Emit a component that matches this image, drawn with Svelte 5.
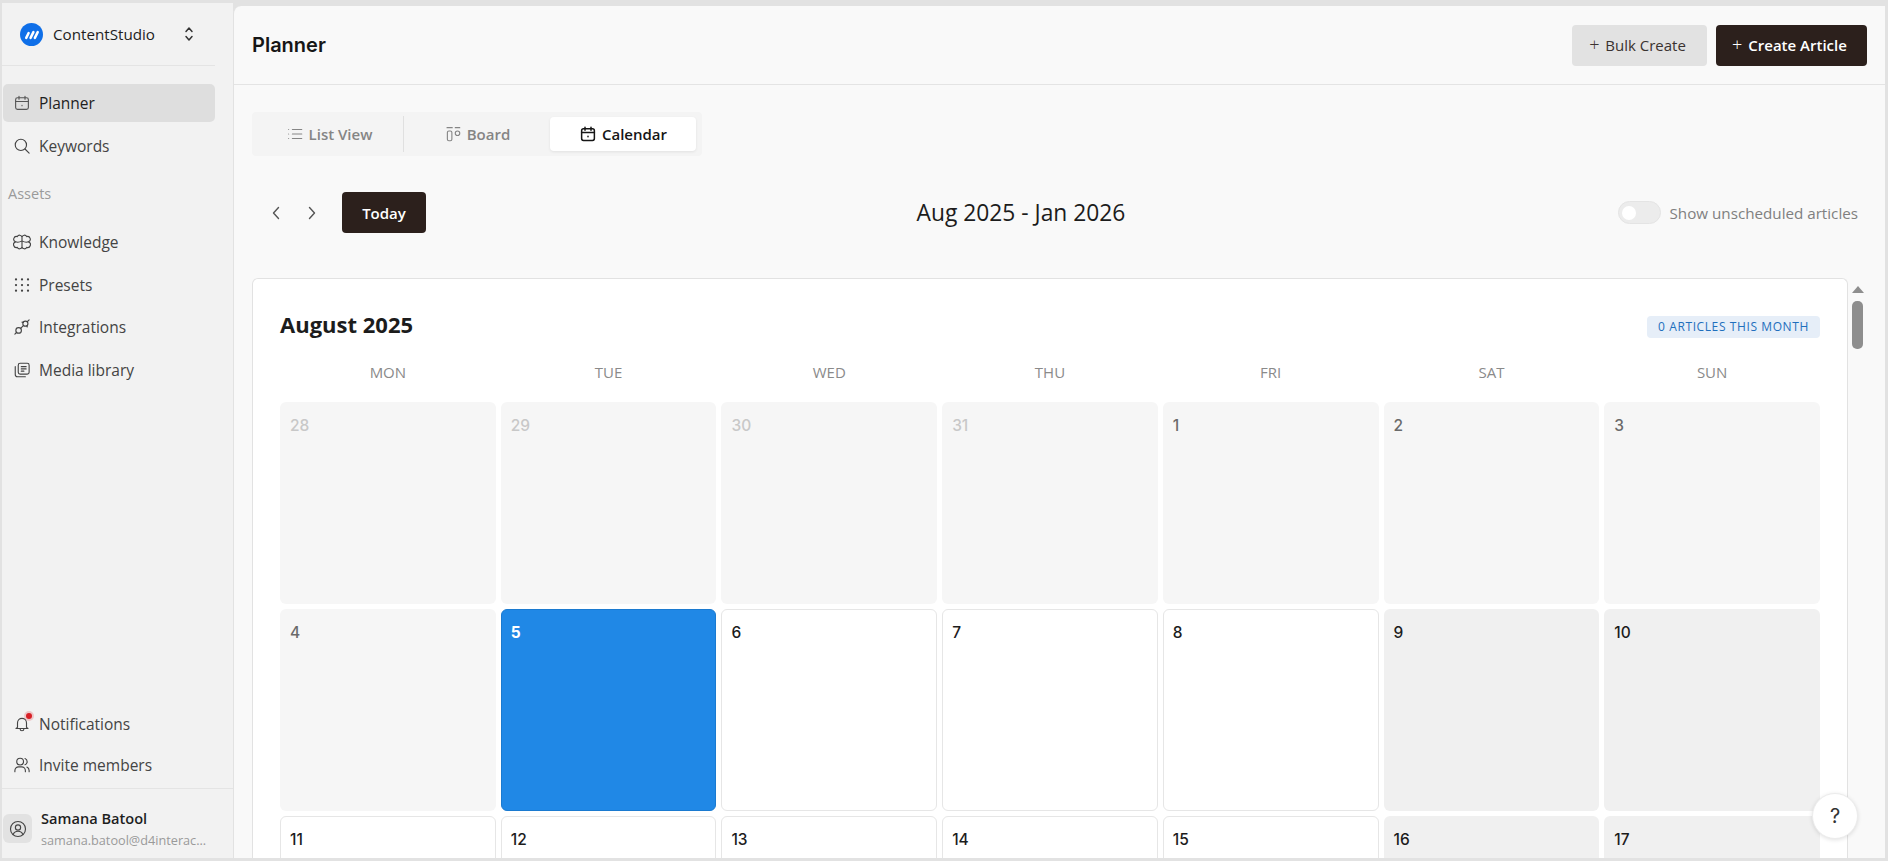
<script lang="ts">
    interface Day {
        n: number;
        kind: 'muted' | 'past' | 'today' | 'open' | 'weekend';
    }

    const navTop = ['Planner', 'Keywords'];
    const navAssets = ['Knowledge', 'Presets', 'Integrations', 'Media library'];
    const weekdays = ['MON', 'TUE', 'WED', 'THU', 'FRI', 'SAT', 'SUN'];

    const days: Day[] = [
        { n: 28, kind: 'muted' }, { n: 29, kind: 'muted' }, { n: 30, kind: 'muted' }, { n: 31, kind: 'muted' },
        { n: 1, kind: 'past' }, { n: 2, kind: 'past' }, { n: 3, kind: 'past' },
        { n: 4, kind: 'past' }, { n: 5, kind: 'today' }, { n: 6, kind: 'open' }, { n: 7, kind: 'open' },
        { n: 8, kind: 'open' }, { n: 9, kind: 'weekend' }, { n: 10, kind: 'weekend' },
        { n: 11, kind: 'open' }, { n: 12, kind: 'open' }, { n: 13, kind: 'open' }, { n: 14, kind: 'open' },
        { n: 15, kind: 'open' }, { n: 16, kind: 'weekend' }, { n: 17, kind: 'weekend' }
    ];
</script>

{#snippet icon(name: string)}
    <svg class="icon" viewBox="0 0 24 24" fill="none" stroke="currentColor" stroke-width="1.5" stroke-linecap="round" stroke-linejoin="round">
        {#if name === 'Planner' || name === 'Calendar'}
            <rect x="3.5" y="5" width="17" height="15.5" rx="2.5" />
            <path d="M8 3v4M16 3v4M3.5 10h17M12 15v.5" />
        {:else if name === 'Keywords'}
            <circle cx="10.5" cy="10.5" r="7.5" />
            <path d="M16 16l5.5 5.5" />
        {:else if name === 'Knowledge'}
            <path d="M12 5.5A3.3 3.3 0 0 0 5.8 4.8 3.3 3.3 0 0 0 3.5 11.8 3.3 3.3 0 0 0 5.8 19.2 3.3 3.3 0 0 0 12 18.5 3.3 3.3 0 0 0 18.2 19.2 3.3 3.3 0 0 0 20.5 11.8 3.3 3.3 0 0 0 18.2 4.8 3.3 3.3 0 0 0 12 5.5V18.5M3.5 11.8c2.5 1 5.5.5 8.5-1.3 3 1.8 6 2.3 8.5 1.3" />
        {:else if name === 'Presets'}
            <path stroke-width="3" d="M4 4.5h.01M12 4.5h.01M20 4.5h.01M4 12h.01M12 12h.01M20 12h.01M4 19.5h.01M12 19.5h.01M20 19.5h.01" />
        {:else if name === 'Integrations'}
            <circle cx="7.5" cy="16.5" r="3.7" />
            <circle cx="16.5" cy="7.5" r="3.4" />
            <path d="M2.5 21.5 5 19M21.5 2.500 19 5M10.3 13.7l3.8-3.8M12 5.500l2 .5M18.500 10l.5 2" />
        {:else if name === 'Media library'}
            <rect x="7" y="3" width="14.5" height="14.5" rx="2.5" />
            <path d="M3 7.500V18a3 3 0 0 0 3 3h10.500M11 7.500h6.500M11 10.500h6.500M11 13.500h3.500" />
        {:else if name === 'Notifications'}
            <path d="M6 16.500V10.500a6 6 0 0 1 12 0v6l2 1.500H4zM9.500 18.500a2.500 2.500 0 0 0 5 0" />
        {:else if name === 'Invite members'}
            <circle cx="9.5" cy="7.5" r="4.5" />
            <path d="M2.500 21v-1.500a5 5 0 0 1 5-5h4a5 5 0 0 1 5 5V21M16 3.300a4.500 4.500 0 0 1 0 8.400M18.500 14.800a5 5 0 0 1 3 4.700V21" />
        {:else if name === 'List View'}
            <path d="M8.500 6H21M8.500 12H21M8.500 18H21M3.500 6h.01M3.500 12h.01M3.500 18h.01" />
        {:else if name === 'Board'}
            <path d="M4 3.500h7M15 3.500h6" />
            <rect x="4.5" y="8" width="6" height="13" rx="2" />
            <circle cx="18" cy="11" r="3" />
        {:else if name === 'User'}
            <circle cx="12" cy="12" r="10" />
            <circle cx="12" cy="10" r="3.5" />
            <path d="M5.500 19.500c1-3 3.500-4.500 6.500-4.500s5.500 1.500 6.500 4.500" />
        {/if}
    </svg>
{/snippet}

<div class="shell">
    <aside class="sidebar">
        <div class="brand">
            <span class="logo">
                <svg viewBox="0 0 24 24" fill="none" stroke="#fff" stroke-width="2.6" stroke-linecap="round">
                    <path d="M6.500 15.500 9 10.500M11 15.500l3-6M15.500 15.500l3-6" />
                </svg>
            </span>
            <span class="brand-name">ContentStudio</span>
            <svg class="updown" viewBox="0 0 12 16" fill="none" stroke="currentColor" stroke-width="1.5" stroke-linecap="round" stroke-linejoin="round">
                <path d="M3 5.500 6 2l3 3.500M3 10.500 6 14l3-3.500" />
            </svg>
        </div>

        <nav class="nav-top">
            {#each navTop as item, i}
                <div class="nav-item" class:active={i === 0}>
                    {@render icon(item)}
                    <span>{item}</span>
                </div>
            {/each}
        </nav>

        <div class="section-label">Assets</div>

        <nav class="nav-assets">
            {#each navAssets as item}
                <div class="nav-item">
                    {@render icon(item)}
                    <span>{item}</span>
                </div>
            {/each}
        </nav>

        <div class="nav-bottom">
            <div class="nav-item">
                <span class="bell">
                    {@render icon('Notifications')}
                    <i class="dot"></i>
                </span>
                <span>Notifications</span>
            </div>
            <div class="nav-item">
                {@render icon('Invite members')}
                <span>Invite members</span>
            </div>
        </div>

        <div class="account">
            <span class="avatar">{@render icon('User')}</span>
            <div class="who">
                <div class="who-name">Samana Batool</div>
                <div class="who-mail">samana.batool@d4interac...</div>
            </div>
        </div>
    </aside>

    <main class="main">
        <header class="topbar">
            <h1>Planner</h1>
            <div class="actions">
                <button class="btn light"><span class="plus">+</span> Bulk Create</button>
                <button class="btn dark"><span class="plus">+</span> Create Article</button>
            </div>
        </header>

        <div class="content">
            <div class="tabs">
                <div class="tab list">{@render icon('List View')}<span>List View</span></div>
                <div class="tab board">{@render icon('Board')}<span>Board</span></div>
                <div class="tab selected">{@render icon('Calendar')}<span>Calendar</span></div>
            </div>

            <div class="toolbar">
                <div class="pager">
                    <svg class="chev" viewBox="0 0 12 16" fill="none" stroke="currentColor" stroke-width="1.4" stroke-linecap="round" stroke-linejoin="round"><path d="M8.500 2.500 3.500 8l5 5.500" /></svg>
                    <svg class="chev" viewBox="0 0 12 16" fill="none" stroke="currentColor" stroke-width="1.4" stroke-linecap="round" stroke-linejoin="round"><path d="M3.500 2.500 8.500 8l-5 5.500" /></svg>
                    <button class="btn dark today">Today</button>
                </div>
                <div class="range">Aug 2025 - Jan 2026</div>
                <div class="unscheduled">
                    <span class="toggle"><i></i></span>
                    <span>Show unscheduled articles</span>
                </div>
            </div>

            <div class="scroller">
                <section class="month">
                    <div class="month-head">
                        <h2>August 2025</h2>
                        <span class="badge">0 ARTICLES THIS MONTH</span>
                    </div>
                    <div class="grid weekdays">
                        {#each weekdays as d}
                            <div>{d}</div>
                        {/each}
                    </div>
                    <div class="grid cells">
                        {#each days as day}
                            <div class="cell {day.kind}">{day.n}</div>
                        {/each}
                    </div>
                </section>
                <div class="scrollbar">
                    <i class="arrow"></i>
                    <i class="thumb"></i>
                </div>
            </div>
        </div>

        <button class="help">?</button>
    </main>
</div>

<style>
    :global(body) {
        margin: 0;
        background: #e2e2e2;
    }

    .shell {
        height: 861px;
        box-sizing: border-box;
        padding: 3px 3px 3px 2px;
        display: grid;
        grid-template-columns: 231px 1fr;
        overflow: hidden;
        font-family: "Open Sans", "Noto Sans", sans-serif;
        color: #1c1c1c;
    }

    .icon {
        width: 18px;
        height: 18px;
        flex: none;
    }

    /* sidebar */
    .sidebar {
        background: #f2f2f2;
        display: flex;
        flex-direction: column;
        min-height: 0;
    }

    .brand {
        height: 62px;
        margin-right: 18px;
        padding-left: 18px;
        display: flex;
        align-items: center;
        border-bottom: 1px solid #e4e4e4;
    }

    .logo {
        width: 23px;
        height: 23px;
        border-radius: 50%;
        background: #0f6fe8;
        display: block;
        flex: none;
    }

    .logo svg {
        display: block;
        width: 23px;
        height: 23px;
    }

    .brand-name {
        margin-left: 10px;
        font-size: 15.2px;
        font-weight: 500;
        color: #1e1e1e;
    }

    .updown {
        margin-left: 28px;
        width: 12px;
        height: 16px;
        color: #333;
    }

    .nav-top {
        margin: 18px 18px 0 1px;
        display: flex;
        flex-direction: column;
        gap: 5px;
    }

    .nav-item {
        height: 38px;
        padding-left: 10px;
        display: flex;
        align-items: center;
        gap: 8px;
        font-size: 15.5px;
        font-weight: 500;
        color: #444;
        border-radius: 5px;
    }

    .nav-item.active {
        background: #dedede;
        color: #1e1e1e;
    }

    .nav-item.active .icon {
        color: #555;
    }

    .section-label {
        margin: 19px 0 0 6px;
        height: 24px;
        font-size: 14.5px;
        color: #9a9a9a;
    }

    .nav-assets {
        margin: 15px 18px 0 1px;
        display: flex;
        flex-direction: column;
        gap: 4.6px;
    }

    .nav-bottom {
        margin: auto 18px 0 1px;
        display: flex;
        flex-direction: column;
        gap: 3px;
    }

    .bell {
        position: relative;
        display: flex;
    }

    .dot {
        position: absolute;
        top: -2px;
        right: -1px;
        width: 6px;
        height: 6px;
        border-radius: 50%;
        background: #d81f26;
        box-shadow: 0 0 0 2px rgba(216, 31, 38, 0.2);
    }

    .account {
        margin-top: 4px;
        height: 70px;
        box-sizing: border-box;
        padding: 10px 0 0 1px;
        border-top: 1px solid #e4e4e4;
        display: flex;
        align-items: center;
        gap: 9px;
    }

    .avatar {
        width: 29px;
        height: 29px;
        border-radius: 6px;
        background: #e2e2e2;
        display: flex;
        align-items: center;
        justify-content: center;
        color: #444;
    }

    .who-name {
        font-size: 14.6px;
        font-weight: 600;
        color: #1e1e1e;
    }

    .who-mail {
        margin-top: 3px;
        font-size: 12.7px;
        color: #9a9a9a;
    }

    /* main panel */
    .main {
        position: relative;
        margin-top: 3px;
        background: #f9f9f9;
        border-radius: 8px 0 0 0;
        border-left: 1px solid #e2e2e2;
        display: flex;
        flex-direction: column;
        min-height: 0;
        overflow: hidden;
    }

    .topbar {
        height: 79px;
        flex: none;
        box-sizing: border-box;
        padding: 0 18px;
        display: flex;
        align-items: center;
        justify-content: space-between;
        border-bottom: 1px solid #e4e4e4;
    }

    h1 {
        margin: 0;
        font-family: Inter, sans-serif;
        font-size: 20px;
        font-weight: 600;
        color: #161616;
    }

    .actions {
        display: flex;
        gap: 9px;
    }

    .btn {
        height: 41px;
        border: none;
        border-radius: 4px;
        font-family: inherit;
        font-size: 15px;
        font-weight: 600;
        padding: 0;
    }

    .btn.light {
        width: 135px;
        padding-right: 4px;
        background: #e2e2e2;
        color: #3a3230;
        font-weight: 500;
    }

    .btn.dark {
        width: 151px;
        padding-right: 4px;
        background: #2c201c;
        color: #fff;
    }

    .plus {
        font-size: 18px;
        font-weight: 300;
        line-height: 1;
        margin-right: 2px;
    }

    .content {
        flex: 1;
        min-height: 0;
        padding: 27px 18px 0 18px;
        display: flex;
        flex-direction: column;
    }

    .tabs {
        width: 450px;
        height: 44px;
        flex: none;
        background: #f4f4f4;
        border-radius: 4px;
        display: flex;
        align-items: center;
        font-size: 15px;
        font-weight: 600;
        color: #858585;
    }

    .tab {
        height: 34px;
        display: flex;
        align-items: center;
        justify-content: center;
        gap: 5px;
    }

    .tab.list {
        width: 152px;
        box-sizing: border-box;
        padding-left: 3px;
        border-right: 1px solid #e0e0e0;
        height: 36px;
    }

    .tab.board {
        width: 146px;
    }

    .tab.selected {
        width: 146px;
        background: #fff;
        border-radius: 4px;
        color: #161616;
        box-shadow: 0 1px 3px rgba(0, 0, 0, 0.08);
    }

    .tab.selected .icon {
        stroke-width: 2;
    }

    .toolbar {
        height: 41px;
        margin-top: 36px;
        padding-right: 9px;
        flex: none;
        display: grid;
        grid-template-columns: 1fr auto 1fr;
        align-items: center;
    }

    .pager {
        display: flex;
        align-items: center;
        padding-left: 18px;
    }

    .chev {
        width: 12px;
        height: 16px;
        color: #555;
        margin-right: 24px;
    }

    .btn.dark.today {
        width: 84px;
        padding-right: 0;
    }

    .range {
        font-size: 22.8px;
        font-weight: 500;
        color: #1c1c1c;
        margin-right: 68px;
    }

    .unscheduled {
        display: flex;
        align-items: center;
        justify-content: flex-end;
        gap: 9px;
        font-size: 15.2px;
        font-weight: 500;
        color: #808080;
    }

    .toggle {
        width: 43px;
        height: 23px;
        box-sizing: border-box;
        border: 1px solid #e4e4e4;
        border-radius: 12px;
        background: #ececec;
        display: flex;
        align-items: center;
        padding-left: 3px;
    }

    .toggle i {
        width: 14px;
        height: 14px;
        border-radius: 50%;
        background: #fff;
    }

    .scroller {
        margin-top: 45px;
        flex: 1;
        min-height: 0;
        display: flex;
        overflow: hidden;
    }

    .month {
        flex: 1;
        box-sizing: border-box;
        background: #fff;
        border: 1px solid #e2e2e2;
        border-bottom: none;
        border-radius: 6px 6px 0 0;
        padding: 0 27px;
        overflow: hidden;
    }

    .month-head {
        height: 80px;
        display: flex;
        align-items: center;
        justify-content: space-between;
        padding-top: 10px;
        box-sizing: border-box;
    }

    h2 {
        margin: 0;
        font-size: 22px;
        font-weight: 700;
        color: #1c1c1c;
    }

    .badge {
        width: 173px;
        height: 22px;
        box-sizing: border-box;
        margin-top: 5px;
        background: #e6eef8;
        border-radius: 4px;
        font-size: 12px;
        font-weight: 500;
        line-height: 22px;
        text-align: center;
        letter-spacing: 0.6px;
        color: #1f6fbd;
    }

    .grid {
        display: grid;
        grid-template-columns: repeat(7, 1fr);
        gap: 5px;
    }

    .weekdays {
        height: 43px;
        text-align: center;
        font-size: 15px;
        font-weight: 500;
        color: #8a8a8a;
        line-height: 27px;
    }

    .cells {
        grid-auto-rows: 202px;
    }

    .cell {
        box-sizing: border-box;
        border-radius: 6px;
        padding: 12px 9px;
        font-family: Inter, sans-serif;
        font-size: 15.5px;
        font-weight: 500;
        line-height: 22px;
        color: #1c1c1c;
        background: #fff;
        border: 1px solid transparent;
    }

    .cell.muted {
        background: #f6f6f6;
        color: #c8c8c8;
    }

    .cell.past {
        background: #f6f6f6;
        color: #6a6a6a;
    }

    .cell.today {
        background: #2088e6;
        border-color: #1a7ad0;
        color: #fff;
        font-weight: 700;
    }

    .cell.open {
        border-color: #e6e6e6;
    }

    .cell.weekend {
        background: #f0f0f0;
    }

    .scrollbar {
        width: 19px;
        flex: none;
        display: flex;
        flex-direction: column;
        align-items: center;
    }

    .arrow {
        margin-top: 8px;
        width: 0;
        height: 0;
        border-left: 6px solid transparent;
        border-right: 6px solid transparent;
        border-bottom: 7px solid #8e8e8e;
    }

    .thumb {
        margin-top: 8px;
        width: 11px;
        height: 48px;
        border-radius: 5px;
        background: #8e8e8e;
    }

    .help {
        position: absolute;
        right: 27px;
        bottom: 19px;
        width: 46px;
        height: 46px;
        border-radius: 50%;
        border: 1px solid #ececec;
        background: #fff;
        box-shadow: 0 1px 4px rgba(0, 0, 0, 0.12);
        font-family: Inter, sans-serif;
        font-size: 20px;
        color: #333;
        padding: 0;
    }
</style>
